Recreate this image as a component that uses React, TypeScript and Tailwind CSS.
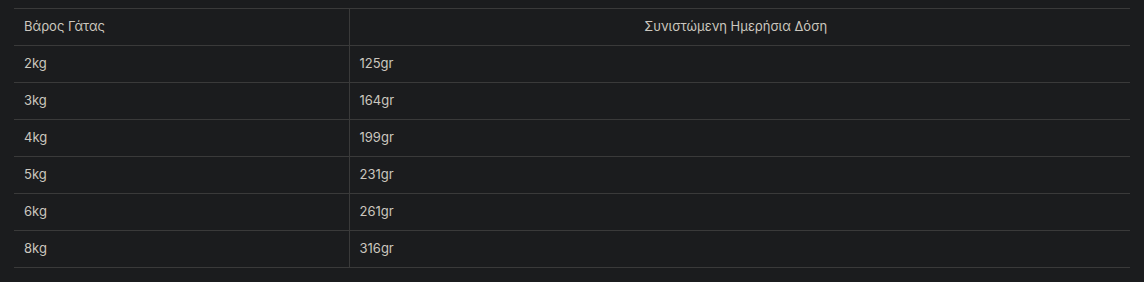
const ROWS = [
  { weight: "2kg", dose: "125gr" },
  { weight: "3kg", dose: "164gr" },
  { weight: "4kg", dose: "199gr" },
  { weight: "5kg", dose: "231gr" },
  { weight: "6kg", dose: "261gr" },
  { weight: "8kg", dose: "316gr" },
];

export default function App() {
  return (
    <div className="min-h-[282px] bg-[#1b1c1e] px-[14px] pt-[8px] font-['Inter','Noto_Sans',sans-serif] text-[13px] text-[#cbc7bf]">
      <table className="w-full border-collapse border-t border-[#3a3a3a]">
        <thead>
          <tr className="h-[37px] border-b border-[#3a3a3a]">
            <th className="w-[335px] border-r border-[#3a3a3a] px-[10px] text-left font-normal">Βάρος Γάτας</th>
            <th className="pl-[10px] pr-[18px] text-center font-normal">Συνιστώμενη Ημερήσια Δόση</th>
          </tr>
        </thead>
        <tbody>
          {ROWS.map((row) => (
            <tr key={row.weight} className="h-[37px] border-b border-[#3a3a3a]">
              <td className="border-r border-[#3a3a3a] px-[10px]">{row.weight}</td>
              <td className="px-[10px]">{row.dose}</td>
            </tr>
          ))}
        </tbody>
      </table>
    </div>
  );
}
